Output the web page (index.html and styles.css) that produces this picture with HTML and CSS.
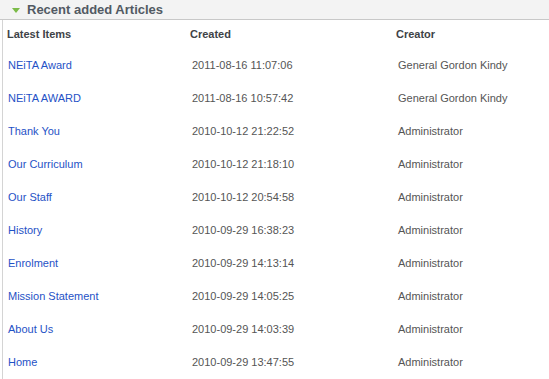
FILE: index.html
```html
<!DOCTYPE html>
<html>
<head>
<meta charset="utf-8">
<link rel="stylesheet" href="styles.css">
</head>
<body>
<div class="panel">
  <div class="panel-head">
    <span class="arrow"></span>
    <span class="title">Recent added Articles</span>
  </div>
  <div class="panel-body">
    <table class="articles">
      <thead>
        <tr><th class="c1">Latest Items</th><th class="c2">Created</th><th class="c3">Creator</th></tr>
      </thead>
      <tbody>
        <tr><td class="c1"><a href="#">NEiTA Award</a></td><td class="c2">2011-08-16 11:07:06</td><td class="c3">General Gordon Kindy</td></tr>
        <tr><td class="c1"><a href="#">NEiTA AWARD</a></td><td class="c2">2011-08-16 10:57:42</td><td class="c3">General Gordon Kindy</td></tr>
        <tr><td class="c1"><a href="#">Thank You</a></td><td class="c2">2010-10-12 21:22:52</td><td class="c3">Administrator</td></tr>
        <tr><td class="c1"><a href="#">Our Curriculum</a></td><td class="c2">2010-10-12 21:18:10</td><td class="c3">Administrator</td></tr>
        <tr><td class="c1"><a href="#">Our Staff</a></td><td class="c2">2010-10-12 20:54:58</td><td class="c3">Administrator</td></tr>
        <tr><td class="c1"><a href="#">History</a></td><td class="c2">2010-09-29 16:38:23</td><td class="c3">Administrator</td></tr>
        <tr><td class="c1"><a href="#">Enrolment</a></td><td class="c2">2010-09-29 14:13:14</td><td class="c3">Administrator</td></tr>
        <tr><td class="c1"><a href="#">Mission Statement</a></td><td class="c2">2010-09-29 14:05:25</td><td class="c3">Administrator</td></tr>
        <tr><td class="c1"><a href="#">About Us</a></td><td class="c2">2010-09-29 14:03:39</td><td class="c3">Administrator</td></tr>
        <tr><td class="c1"><a href="#">Home</a></td><td class="c2">2010-09-29 13:47:55</td><td class="c3">Administrator</td></tr>
      </tbody>
    </table>
  </div>
</div>
</body>
</html>
```

FILE: styles.css
```css
html, body {
  margin: 0;
  padding: 0;
  background: #fff;
  font-family: "Liberation Sans", Arial, sans-serif;
}
.panel {
  width: 549px;
}
.panel-head {
  height: 19px;
  background: #f3f3f3;
  border-bottom: 1px solid #c8c8c8;
  display: flex;
  align-items: center;
  padding-left: 12px;
  width: 537px;
  box-sizing: content-box;
}
.arrow {
  width: 0;
  height: 0;
  border-left: 4px solid transparent;
  border-right: 4px solid transparent;
  border-top: 5px solid #7bbb48;
  margin-right: 7px;
  margin-top: 1px;
}
.title {
  font-size: 13px;
  font-weight: bold;
  color: #525a63;
  line-height: 19px;
}
.panel-body {
  margin-left: 2px;
  border-left: 1px solid #d4d4d4;
  height: 359px;
}
.articles {
  border-collapse: collapse;
  table-layout: fixed;
  width: 546px;
  font-size: 11px;
}
.articles th,
.articles td {
  box-sizing: border-box;
  vertical-align: middle;
}
.articles th {
  height: 28px;
  text-align: left;
  font-weight: bold;
  color: #3e4347;
  padding: 0 0 1px 2px;
}
.articles th.c1 { padding-left: 4px; }
.articles td {
  height: 33px;
  padding: 0 0 0 4px;
  color: #555;
}
.articles td.c1 { padding-left: 5px; }
.articles .c1 { width: 185px; }
.articles .c2 { width: 206px; }
.articles a {
  color: #1f52c6;
  text-decoration: none;
}
```
